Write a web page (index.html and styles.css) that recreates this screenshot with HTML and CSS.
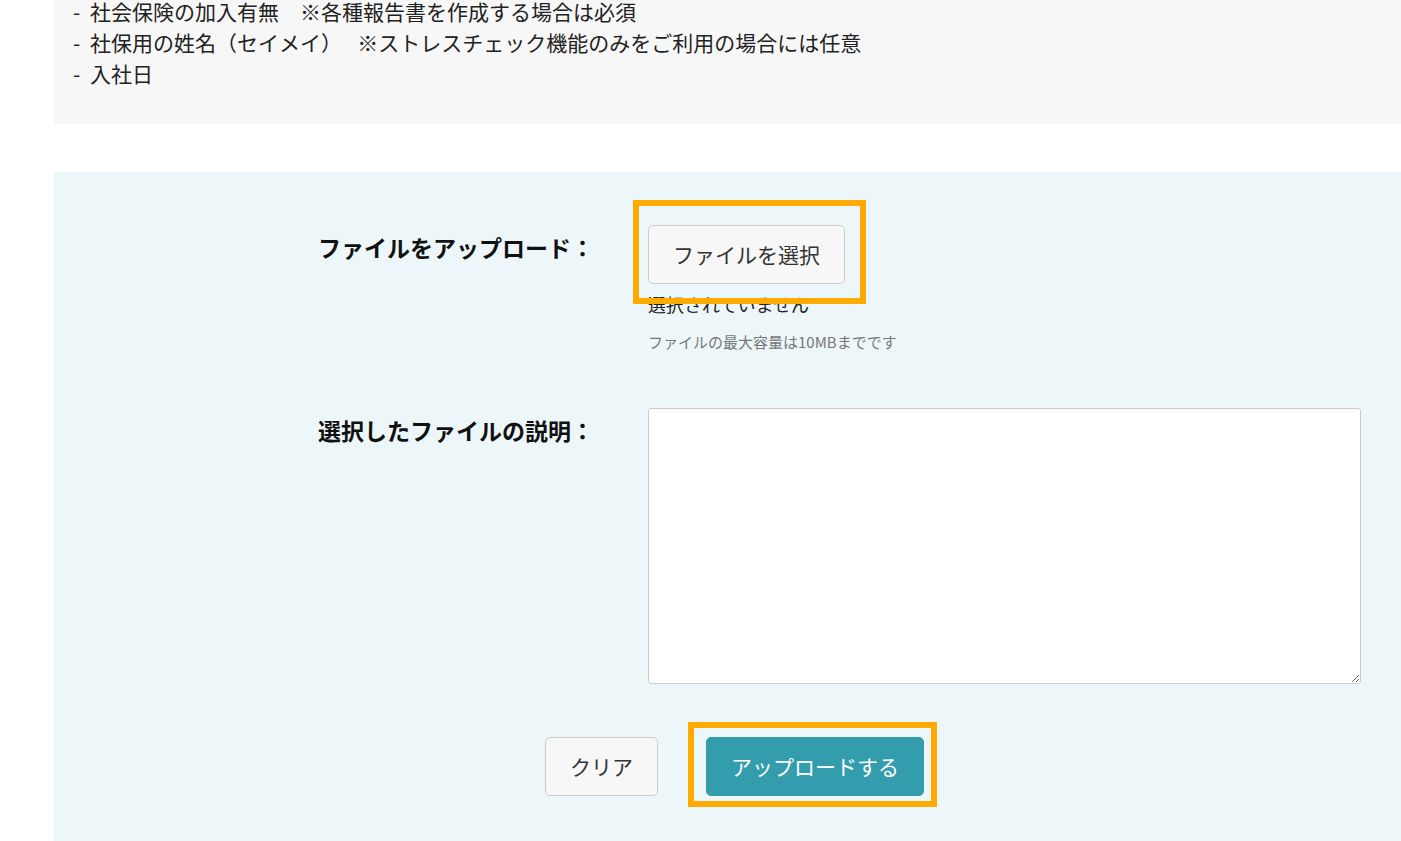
FILE: index.html
```html
<!DOCTYPE html>
<html lang="ja">

<head>
    <meta charset="UTF-8">
    <meta name="viewport" content="width=device-width, initial-scale=1.0">
    <title>ファイルをアップロード</title>
    <link rel="stylesheet" href="styles.css">
</head>

<body>
    <div class="page">
        <div class="notice">
            <ul class="notice-list">
                <li>社会保険の加入有無　※各種報告書を作成する場合は必須</li>
                <li>社保用の姓名（セイメイ）　 ※ストレスチェック機能のみをご利用の場合には任意</li>
                <li>入社日</li>
            </ul>
        </div>

        <form class="upload-form" onsubmit="return false;">
            <div class="form-row">
                <label class="form-label" for="uploadFile">ファイルをアップロード：</label>
                <div class="form-field">
                    <span class="highlight highlight-file">
                        <button type="button" class="btn btn-light" onclick="document.querySelector('#uploadFile').click();">ファイルを選択</button>
                    </span>
                    <input type="file" id="uploadFile" class="hidden-input">
                    <span class="file-name">選択されていません</span>
                    <p class="form-hint">ファイルの最大容量は10MBまでです</p>
                </div>
            </div>

            <div class="form-row">
                <label class="form-label" for="fileDescription">選択したファイルの説明：</label>
                <div class="form-field">
                    <textarea id="fileDescription" class="description"></textarea>
                </div>
            </div>

            <div class="form-actions">
                <button type="reset" class="btn btn-light">クリア</button>
                <span class="highlight highlight-submit">
                    <button type="submit" class="btn btn-primary">アップロードする</button>
                </span>
            </div>
        </form>
    </div>
</body>

</html>
```

FILE: styles.css
```css
body {
    margin: 0;
    font-family: "Noto Sans CJK JP", "Noto Sans", sans-serif;
    color: #222;
    background-color: #fff;
    overflow: hidden;
}

.page {
    padding-left: 54px;
}

.notice {
    background-color: #f7f7f7;
    padding: 0 0 35px 19px;
}

.notice-list {
    list-style-type: none;
    margin: -4px 0 0;
    padding: 0;
    font-size: 21px;
    line-height: 31px;
    color: #222;
}

.notice-list li::before {
    content: "-";
    display: inline-block;
    width: 17px;
}

.upload-form {
    margin-top: 48px;
    background-color: #edf7f9;
    padding: 53px 40px 60px 0;
}

.form-row {
    display: grid;
    grid-template-columns: 540px 1fr;
    column-gap: 54px;
    margin-bottom: 56px;
}

.form-label {
    text-align: right;
    font-weight: bold;
    font-size: 23px;
    line-height: 30px;
    padding-top: 7px;
    color: #111;
}

.form-field {
    display: flex;
    flex-direction: column;
    align-items: flex-start;
}

.hidden-input {
    display: none;
}

.btn {
    font-family: inherit;
    font-size: 21px;
    line-height: 29px;
    padding: 14px 24px;
    border-radius: 5px;
    cursor: pointer;
}

.btn-light {
    background-color: #f7f7f7;
    border: 1px solid #ccc;
    color: #333;
}

.btn-primary {
    background-color: #339dae;
    border: 1px solid #339dae;
    color: #fff;
}

.file-name {
    margin-top: 8px;
    font-size: 18px;
    line-height: 24px;
    color: #222;
}

.form-hint {
    margin: 16px 0 0;
    font-size: 15px;
    line-height: 20px;
    color: #777;
}

.description {
    width: 713px;
    height: 276px;
    box-sizing: border-box;
    border: 1px solid #ccc;
    border-radius: 3px;
    background-color: #fff;
    resize: both;
}

.form-actions {
    display: flex;
    justify-content: center;
    gap: 48px;
    padding-left: 54px;
    margin-top: -3px;
}

.highlight {
    position: relative;
    display: inline-block;
}

.highlight::after {
    content: "";
    position: absolute;
    border: 6px solid #ffaa00;
    pointer-events: none;
    z-index: 2;
}

.highlight-file::after {
    top: -25px;
    left: -15px;
    right: -21px;
    bottom: -20px;
}

.highlight-submit::after {
    top: -15px;
    left: -18px;
    right: -13px;
    bottom: -11px;
}
```
